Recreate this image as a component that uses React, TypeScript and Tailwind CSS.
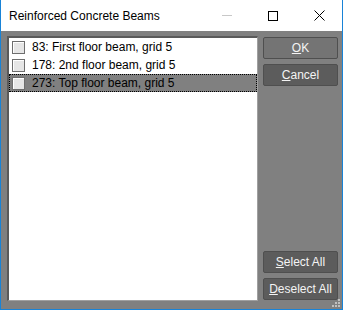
import React from "react";

const font = { fontFamily: '"Liberation Sans", Arial, sans-serif' };

function Check() {
  return <span className="inline-block w-[13px] h-[13px] border border-[#6e6e6e] bg-[#e6e6e6] shrink-0 shadow-[inset_1px_1px_0_#ffffff]" />;
}

function Row({ label, selected }: { label: string; selected?: boolean }) {
  return (
    <div
      className={`flex items-center h-[18px] pl-[3px] gap-[7px] ${selected ? "bg-[#808080] outline-1 outline-dotted outline-[#000] -outline-offset-1" : ""}`}
    >
      <Check />
      <span className="text-[12px] text-[#000] leading-none">{label}</span>
    </div>
  );
}

function Btn({ children, light }: { children: React.ReactNode; light?: boolean }) {
  return (
    <button
      className={`w-[75px] h-[22px] rounded-[2px] border border-[#4f4f4f] text-[12px] text-[#f4f4f4] leading-none flex items-center justify-center ${light ? "bg-[#747474]" : "bg-[#5c5c5c]"}`}
      style={font}
    >
      {children}
    </button>
  );
}

export default function App() {
  return (
    <div className="w-[343px] h-[310px] flex flex-col border-x border-b border-[#1883d7]" style={font}>
      <div className="h-[31px] bg-white flex items-center shrink-0">
        <span className="pl-[8px] text-[12px] text-black flex-1">Reinforced Concrete Beams</span>
        <div className="flex items-center h-full">
          <div className="w-[46px] h-full flex items-center justify-center">
            <div className="w-[10px] h-px bg-[#c8c8c8]" />
          </div>
          <div className="w-[46px] h-full flex items-center justify-center">
            <div className="w-[10px] h-[10px] border border-black" />
          </div>
          <div className="w-[46px] h-full flex items-center justify-center">
            <svg width="11" height="11" viewBox="0 0 11 11">
              <path d="M0.5 0.5 L10.5 10.5 M10.5 0.5 L0.5 10.5" stroke="#000" strokeWidth="1" />
            </svg>
          </div>
        </div>
      </div>
      <div className="flex-1 bg-[#808080] flex gap-[5px] pl-[6px] pt-[5px] pb-[8px] pr-[4px] relative">
        <div className="w-[251px] bg-white border-t-2 border-l-2 border-[#5a5a5a] border-r border-b border-r-[#a0a0a0] border-b-[#a0a0a0]">
          <Row label="83: First floor beam, grid 5" />
          <Row label="178: 2nd floor beam, grid 5" />
          <Row label="273: Top floor beam, grid 5" selected />
        </div>
        <div className="flex flex-col justify-between pt-px pb-[1px]">
          <div className="flex flex-col gap-[5px]">
            <Btn light><span><span className="underline">O</span>K</span></Btn>
            <Btn><span><span className="underline">C</span>ancel</span></Btn>
          </div>
          <div className="flex flex-col gap-[5px]">
            <Btn><span><span className="underline">S</span>elect All</span></Btn>
            <Btn><span><span className="underline">D</span>eselect All</span></Btn>
          </div>
        </div>
        <svg className="absolute right-[1px] bottom-[1px]" width="9" height="9" viewBox="0 0 9 9">
          <rect x="6" y="0" width="2" height="2" fill="#c0c0c0" />
          <rect x="3" y="3" width="2" height="2" fill="#c0c0c0" />
          <rect x="6" y="3" width="2" height="2" fill="#c0c0c0" />
          <rect x="0" y="6" width="2" height="2" fill="#c0c0c0" />
          <rect x="3" y="6" width="2" height="2" fill="#c0c0c0" />
          <rect x="6" y="6" width="2" height="2" fill="#c0c0c0" />
        </svg>
      </div>
    </div>
  );
}
